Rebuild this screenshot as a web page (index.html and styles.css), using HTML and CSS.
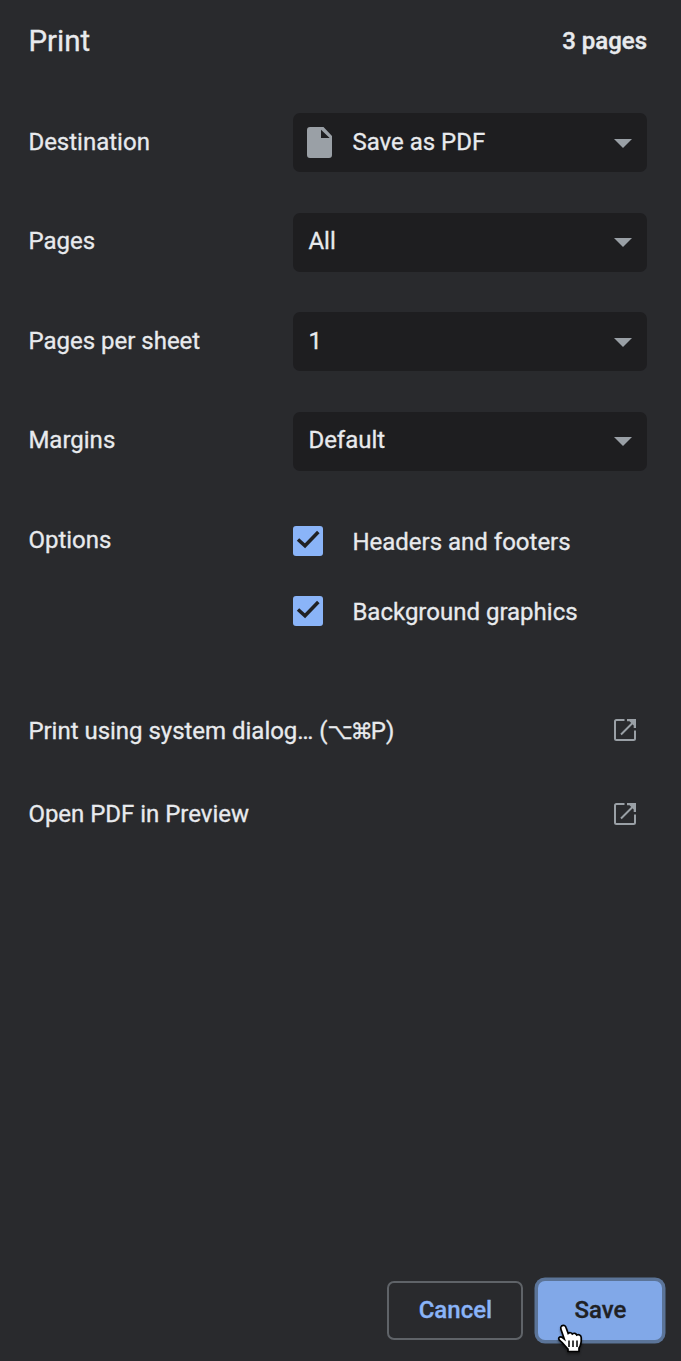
FILE: index.html
```html
<!DOCTYPE html>
<html lang="en">
<head>
<meta charset="utf-8">
<title>Print</title>
<link rel="stylesheet" href="styles.css">
</head>
<body>
<main class="dialog">
  <header class="header"><h1 class="title">Print</h1><span class="count">3 pages</span></header>
  <section class="settings">
    <div class="row"><span class="label">Destination</span>
      <div class="select with-icon">
        <svg class="file" viewBox="0 0 25 31"><path fill-rule="evenodd" d="M3 0h13.500l8.500 9v19a3 3 0 0 1-3 3H3a3 3 0 0 1-3-3V3a3 3 0 0 1 3-3zM14 2.700V11h8.700z"/></svg>
        <span class="value">Save as PDF</span><svg class="arrow" viewBox="0 0 18 9"><path d="M0 0h18L9 9z"/></svg></div></div>
    <div class="row"><span class="label">Pages</span>
      <div class="select"><span class="value">All</span><svg class="arrow" viewBox="0 0 18 9"><path d="M0 0h18L9 9z"/></svg></div></div>
    <div class="row"><span class="label">Pages per sheet</span>
      <div class="select"><span class="value">1</span><svg class="arrow" viewBox="0 0 18 9"><path d="M0 0h18L9 9z"/></svg></div></div>
    <div class="row"><span class="label">Margins</span>
      <div class="select"><span class="value">Default</span><svg class="arrow" viewBox="0 0 18 9"><path d="M0 0h18L9 9z"/></svg></div></div>
  </section>
  <section class="options"><span class="label">Options</span>
    <div class="checks">
      <div class="check"><span class="box"><svg viewBox="0 0 30 30"><path d="M5 13.500l7 6.300L25.300 6"/></svg></span><span>Headers and footers</span></div>
      <div class="check"><span class="box"><svg viewBox="0 0 30 30"><path d="M5 13.500l7 6.300L25.300 6"/></svg></span><span>Background graphics</span></div>
    </div>
  </section>
  <nav class="links">
    <div class="link"><span>Print using system dialog… (<span class="keys">⌥⌘</span>P)</span><svg class="open" viewBox="0 0 24 24"><path class="frame" d="M11.500 2H3.500Q2 2 2 3.500v17Q2 22 3.500 22h17Q22 22 22 20.500V12.500M8 16.500L20.500 4"/><path class="tip" d="M14 1h9v9h-2.300V7.500L16.500 3.200H14z"/></svg></div>
    <div class="link"><span>Open PDF in Preview</span><svg class="open low" viewBox="0 0 24 24"><path class="frame" d="M11.500 2H3.500Q2 2 2 3.500v17Q2 22 3.500 22h17Q22 22 22 20.500V12.500M8 16.500L20.500 4"/><path class="tip" d="M14 1h9v9h-2.300V7.500L16.500 3.200H14z"/></svg></div>
  </nav>
  <footer class="footer">
    <button class="button cancel">Cancel</button>
    <button class="button save">Save
      <svg class="cursor" viewBox="0 0 28 32"><path class="hand" d="M4.500 3C6.500 1.500 8.500 2.700 9 4.500L11.200 10.500C12.500 9.300 14.500 9.500 15.300 11C17 9.700 19 10.200 19.700 12C21.700 11 24 12 24.200 14.500C24.500 19 23.800 22.500 22 25V28.500H11V26C8 23 6 20 3.200 17.800C0 15.500 2.500 12.500 6 15L7.300 16L4 6.500Q3.200 4.200 4.500 3z"/><path class="lines" d="M12 17.500v6.500M16 17.500v6.500M20 17.500v6.500"/></svg>
    </button>
  </footer>
</main>
</body>
</html>
```
FILE: styles.css
```css
* { box-sizing: border-box; }
body { margin: 0; background: #292a2d; color: #e8eaed; font-family: Roboto, sans-serif; font-size: 24px; line-height: 30px; -webkit-text-stroke: 0.3px currentColor; }
.dialog { display: flex; flex-direction: column; height: 1361px; overflow: hidden; }
.header { display: flex; justify-content: space-between; align-items: center; height: 82px; padding: 0 34px 0 28.400px; }
.title { margin: 0; font-size: 29.500px; font-weight: 400; }
.count { font-weight: 500; -webkit-text-stroke: 0.400px currentColor; }
.settings { display: flex; flex-direction: column; gap: 40.500px; padding: 31px 34px 0 28.400px; }
.row { display: flex; align-items: center; height: 59px; }
.label { width: 265px; flex: none; padding-bottom: 1.400px; }
.select { display: flex; align-items: center; flex: 1; height: 59px; padding: 0 15px; border-radius: 7px; background: #1e1e20; }
.with-icon { padding-left: 13.500px; }
.file { width: 25px; height: 31px; margin-right: 20.500px; fill: #9aa0a6; }
.value { flex: 1; padding-bottom: 1.400px; }
.arrow { width: 18px; height: 9px; fill: #9aa0a6; margin-top: 1px; }
.options { display: flex; padding: 55px 34px 0 28.400px; }
.options > .label { line-height: 28px; }
.checks { display: flex; flex-direction: column; gap: 40px; }
.check { display: flex; gap: 29px; height: 30px; line-height: 32px; }
.box { width: 30px; height: 30px; border-radius: 3px; background: #8ab4f8; }
.box svg { display: block; fill: none; stroke: #202124; stroke-width: 3.500; }
.links { display: flex; flex-direction: column; gap: 53px; padding: 90px 44px 0 28.400px; }
.link { display: flex; justify-content: space-between; align-items: center; height: 30px; letter-spacing: -0.020px; }
.keys { font-family: "DejaVu Sans", sans-serif; font-size: 22px; letter-spacing: -2px; line-height: 1; }
.open { width: 24px; height: 24px; margin-bottom: 1px; }
.low { margin: 1px 0 0; }
.frame { fill: none; stroke: #9aa0a6; stroke-width: 2; }
.tip { fill: #9aa0a6; }
.footer { display: flex; justify-content: flex-end; gap: 15px; margin-top: auto; padding: 0 18.600px 21px; }
.button { position: relative; height: 59px; padding: 0 0 2px; border-radius: 7px; font: 500 24px/30px Roboto, sans-serif; }
.cancel { width: 136px; border: 2px solid #5f6368; background: transparent; color: #8ab4f8; }
.save { width: 124px; border: 0; background: #81a8e8; color: #202124; box-shadow: 0 0 0 3.500px #5b7498; }
.cursor { position: absolute; left: 19px; top: 42px; width: 28px; height: 32px; overflow: visible; filter: drop-shadow(0 2px 1px #0006); }
.hand { fill: #fff; stroke: #000; stroke-width: 1.700; }
.lines { fill: none; stroke: #000; stroke-width: 1.500; }
```
